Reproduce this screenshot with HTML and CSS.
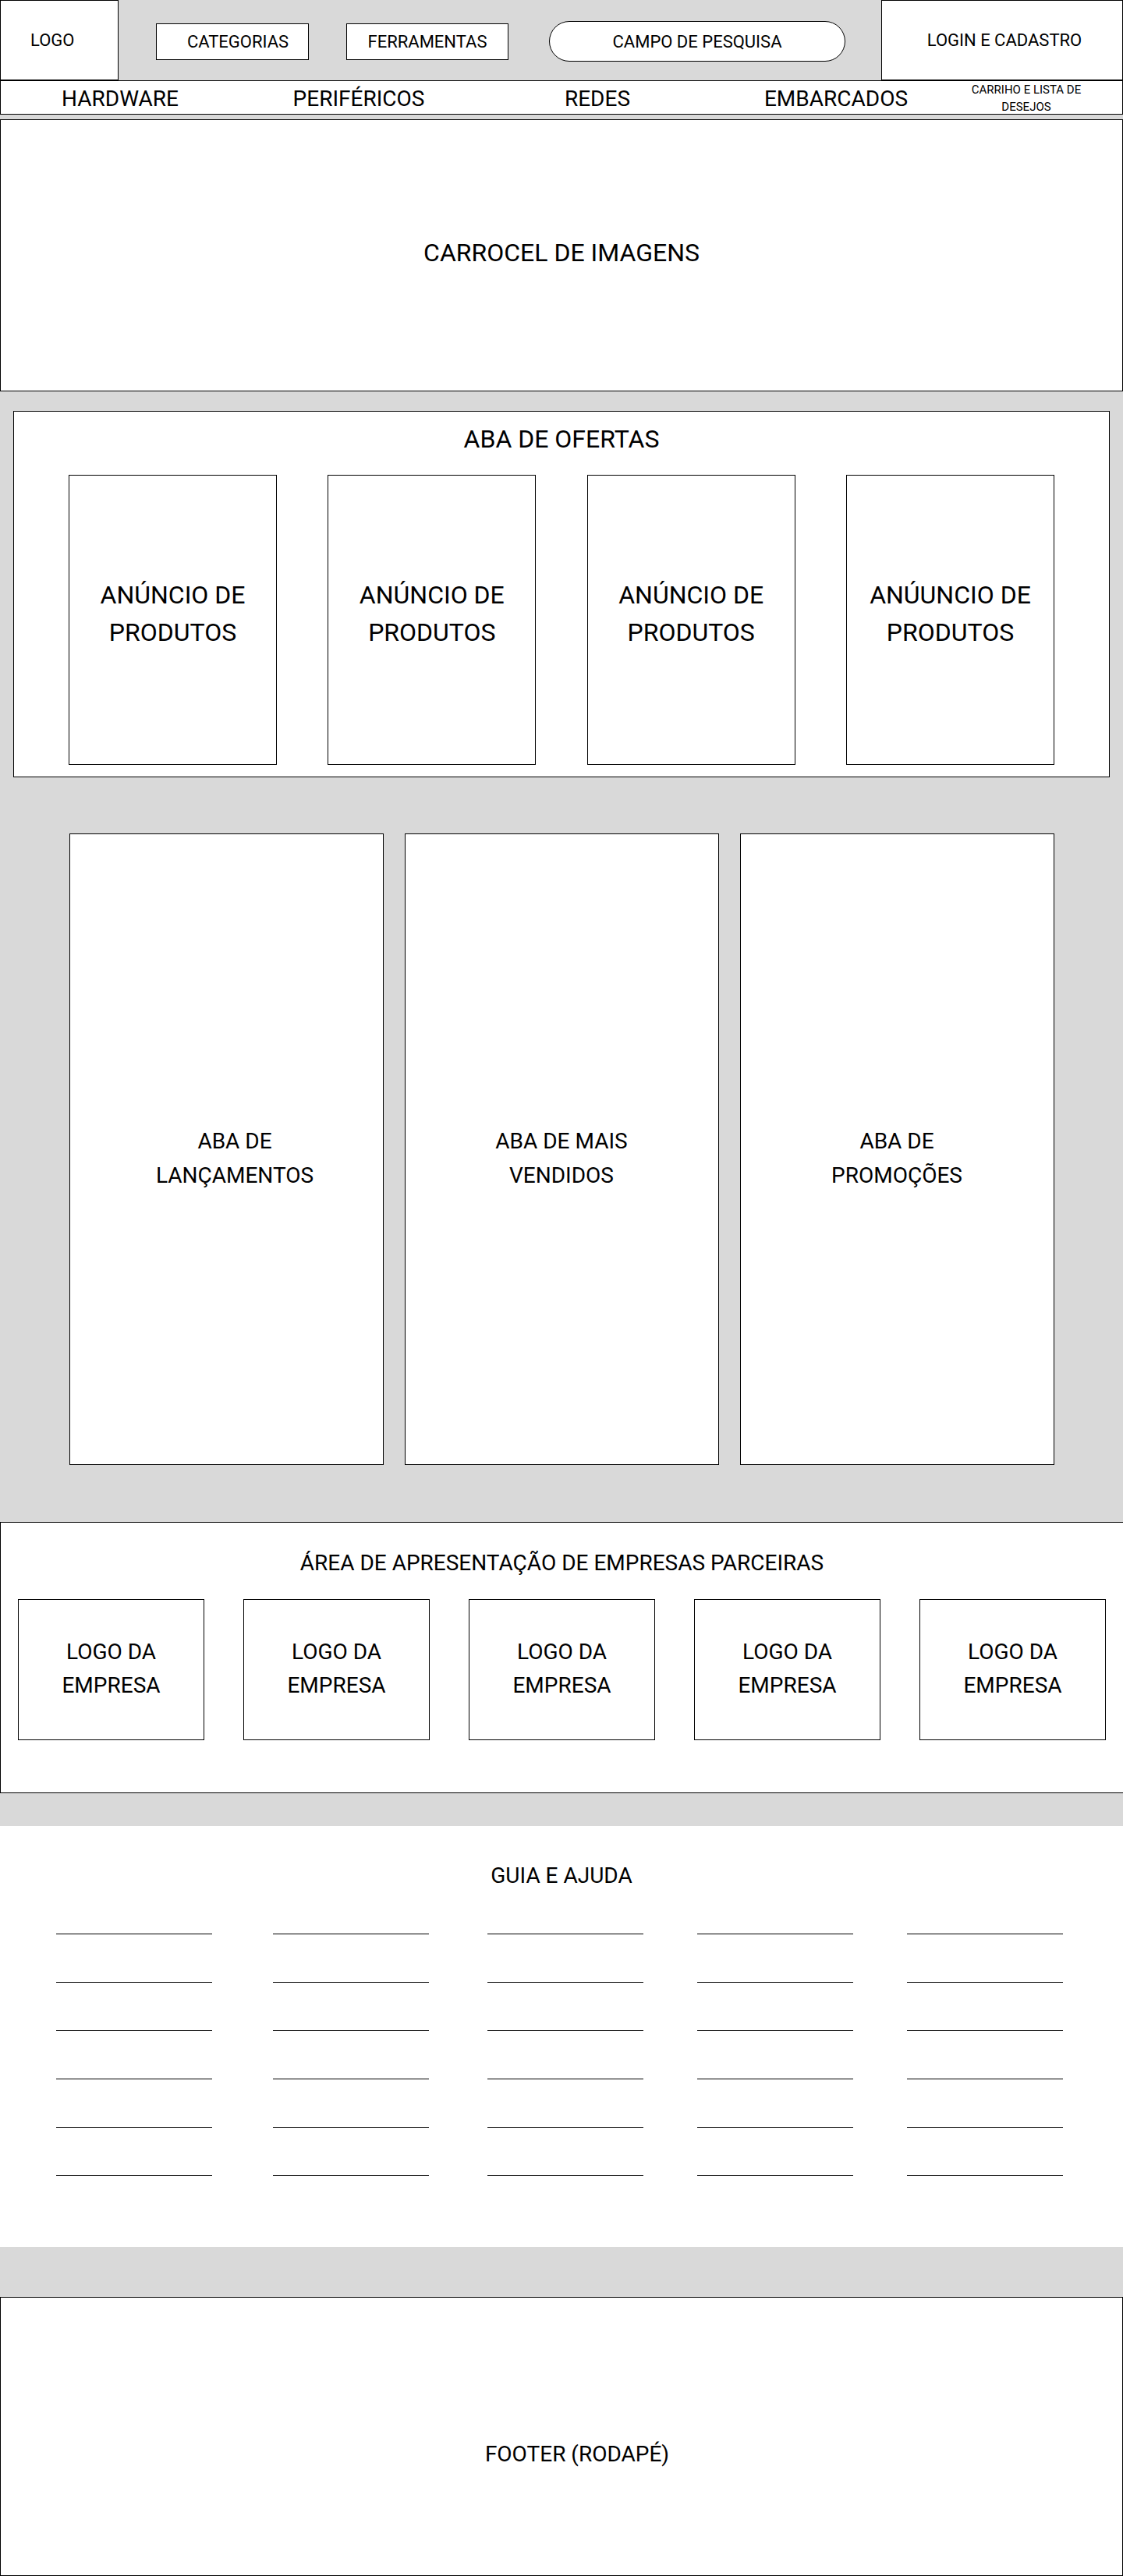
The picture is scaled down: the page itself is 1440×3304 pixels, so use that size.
FILE: index.html
```html
<html>
<head>
  <meta charset="utf-8">
  <link rel="stylesheet" href="styles.css">
</head>
<body>
<header class="topo">
  <div class="logo">LOGO</div>
  <div class="topo-meio">
    <div class="botao botao-categorias">CATEGORIAS</div>
    <div class="botao botao-largo">FERRAMENTAS</div>
    <div class="pesquisa">CAMPO DE PESQUISA</div>
  </div>
  <div class="login">LOGIN E CADASTRO</div>
</header>

<nav class="menu">
  <div>HARDWARE</div>
  <div>PERIFÉRICOS</div>
  <div>REDES</div>
  <div>EMBARCADOS</div>
  <div class="carrinho">CARRIHO E LISTA DE<br>DESEJOS</div>
</nav>

<div class="carrossel">CARROCEL DE IMAGENS</div>

<section class="ofertas">
  <h2 class="titulo-ofertas">ABA DE OFERTAS</h2>
  <div class="anuncios">
    <div class="anuncio">ANÚNCIO DE<br>PRODUTOS</div>
    <div class="anuncio">ANÚNCIO DE<br>PRODUTOS</div>
    <div class="anuncio">ANÚNCIO DE<br>PRODUTOS</div>
    <div class="anuncio">ANÚUNCIO DE<br>PRODUTOS</div>
  </div>
</section>

<section class="abas">
  <div class="aba aba-primeira">ABA DE<br>LANÇAMENTOS</div>
  <div class="aba">ABA DE MAIS<br>VENDIDOS</div>
  <div class="aba">ABA DE<br>PROMOÇÕES</div>
</section>

<section class="parceiros">
  <h2 class="titulo">ÁREA DE APRESENTAÇÃO DE EMPRESAS PARCEIRAS</h2>
  <div class="logos">
    <div class="logo-empresa">LOGO DA<br>EMPRESA</div>
    <div class="logo-empresa">LOGO DA<br>EMPRESA</div>
    <div class="logo-empresa">LOGO DA<br>EMPRESA</div>
    <div class="logo-empresa">LOGO DA<br>EMPRESA</div>
    <div class="logo-empresa">LOGO DA<br>EMPRESA</div>
  </div>
</section>

<section class="ajuda">
  <h2 class="titulo">GUIA E AJUDA</h2>
  <div class="links">
    <div class="coluna">
      <span class="linha"></span><span class="linha"></span><span class="linha"></span>
      <span class="linha"></span><span class="linha"></span><span class="linha"></span>
    </div>
    <div class="coluna">
      <span class="linha"></span><span class="linha"></span><span class="linha"></span>
      <span class="linha"></span><span class="linha"></span><span class="linha"></span>
    </div>
    <div class="coluna">
      <span class="linha"></span><span class="linha"></span><span class="linha"></span>
      <span class="linha"></span><span class="linha"></span><span class="linha"></span>
    </div>
    <div class="coluna">
      <span class="linha"></span><span class="linha"></span><span class="linha"></span>
      <span class="linha"></span><span class="linha"></span><span class="linha"></span>
    </div>
    <div class="coluna">
      <span class="linha"></span><span class="linha"></span><span class="linha"></span>
      <span class="linha"></span><span class="linha"></span><span class="linha"></span>
    </div>
  </div>
</section>

<footer class="rodape">FOOTER (RODAPÉ)</footer>
</body>
</html>
```

FILE: styles.css
```css
* {
  box-sizing: border-box;
}
body {
  margin: 0;
  background: #d9d9d9;
  font-family: Roboto, "Liberation Sans", sans-serif;
  color: #000;
}
h2 {
  margin: 0;
  font-weight: normal;
}

/* topo */
.topo {
  display: flex;
  height: 103px;
}
.logo {
  width: 152px;
  border: 1px solid #000;
  background: #fff;
  display: flex;
  align-items: center;
  padding-left: 38px;
  font-size: 22px;
}
.topo-meio {
  flex: 1;
  display: flex;
  align-items: center;
  padding: 3px 0 0 48px;
  gap: 48px;
}
.botao {
  width: 196px;
  height: 47px;
  border: 1px solid #000;
  background: #fff;
  display: flex;
  align-items: center;
  justify-content: center;
  font-size: 22px;
}
.botao-categorias {
  padding-left: 14px;
}
.botao-largo {
  width: 208px;
}
.pesquisa {
  width: 380px;
  height: 52px;
  margin-left: 4px;
  border: 1px solid #000;
  border-radius: 26px;
  background: #fff;
  display: flex;
  align-items: center;
  justify-content: center;
  font-size: 22px;
}
.login {
  width: 310px;
  border: 1px solid #000;
  background: #fff;
  display: flex;
  align-items: center;
  justify-content: center;
  padding-left: 6px;
  font-size: 22px;
}

/* menu */
.menu {
  display: grid;
  grid-template-columns: repeat(4, 306px) 182px;
  height: 44px;
  border: 1px solid #000;
  background: #fff;
  align-items: center;
  justify-items: center;
  font-size: 28px;
}
.carrinho {
  font-size: 15px;
  line-height: 22px;
  text-align: center;
}

.carrossel {
  margin-top: 6px;
  height: 349px;
  border: 1px solid #000;
  background: #fff;
  display: flex;
  align-items: center;
  justify-content: center;
  padding-bottom: 8px;
  font-size: 32px;
}

/* ofertas */
.ofertas {
  margin: 25px 17px 0;
  height: 470px;
  border: 1px solid #000;
  background: #fff;
  padding-top: 16px;
}
.titulo-ofertas {
  font-size: 32px;
  line-height: 38px;
  text-align: center;
}
.anuncios {
  display: flex;
  justify-content: space-between;
  padding: 0 70px;
  margin-top: 27px;
}
.anuncio {
  width: 267px;
  height: 372px;
  border: 1px solid #000;
  display: flex;
  align-items: center;
  justify-content: center;
  text-align: center;
  padding-bottom: 16px;
  font-size: 32px;
  line-height: 48px;
}

/* abas */
.abas {
  display: flex;
  justify-content: center;
  gap: 27px;
  margin-top: 72px;
}
.aba {
  width: 403px;
  height: 810px;
  border: 1px solid #000;
  background: #fff;
  display: flex;
  align-items: center;
  justify-content: center;
  text-align: center;
  padding-top: 24px;
  font-size: 28px;
  line-height: 44px;
}
.aba-primeira {
  padding-left: 22px;
}

.titulo {
  font-size: 28px;
  line-height: 34px;
  text-align: center;
}

/* parceiros */
.parceiros {
  margin-top: 73px;
  height: 348px;
  border: 1px solid #000;
  border-right: 0;
  background: #fff;
  padding-top: 35px;
}
.logos {
  display: flex;
  gap: 50px;
  padding-left: 22px;
  margin-top: 29px;
}
.logo-empresa {
  width: 239px;
  height: 181px;
  border: 1px solid #000;
  display: flex;
  align-items: center;
  justify-content: center;
  text-align: center;
  padding-bottom: 4px;
  font-size: 28px;
  line-height: 43px;
}

/* guia e ajuda */
.ajuda {
  margin-top: 42px;
  height: 540px;
  background: #fff;
  padding-top: 47px;
}
.links {
  display: grid;
  grid-template-columns: 278px 275px 269px 269px 200px;
  padding-left: 72px;
  margin-top: 57px;
}
.coluna {
  display: flex;
  flex-direction: column;
  gap: 61px;
}
.linha {
  display: block;
  width: 200px;
  height: 1px;
  background: #000;
}

.rodape {
  margin-top: 64px;
  height: 358px;
  border: 1px solid #000;
  background: #fff;
  display: flex;
  align-items: center;
  justify-content: center;
  padding: 44px 0 0 40px;
  font-size: 28px;
}
```
